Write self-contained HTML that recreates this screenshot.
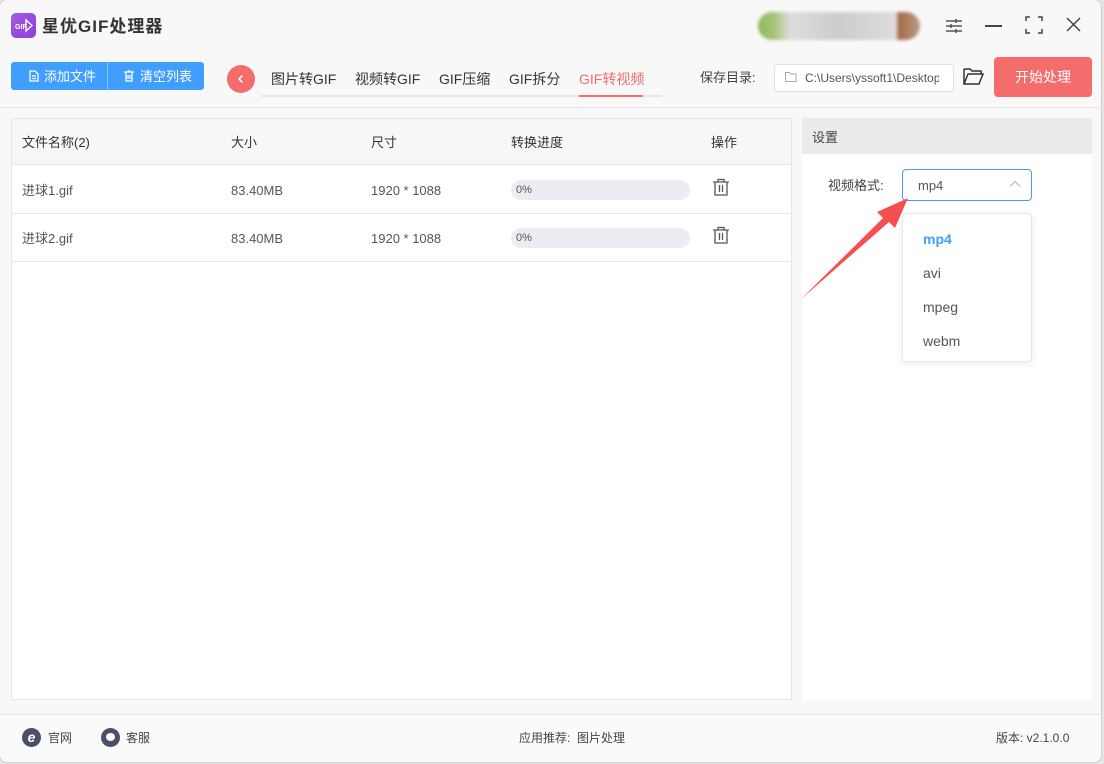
<!DOCTYPE html>
<html><head><meta charset="utf-8"><style>
*{box-sizing:border-box;margin:0;padding:0}
body{width:1104px;height:764px;background:#e6e6e6;font-family:"Liberation Sans","Noto Sans CJK SC",sans-serif;color:#333;position:relative;overflow:hidden;line-height:1.3}
.win{position:absolute;left:-1px;top:-1px;width:1103px;height:764px;background:#f8f8f8;border:1px solid #d0d0d0;border-radius:8px;overflow:hidden}
.abs{position:absolute}
div.abs:not([style*="background"]){margin-top:2px}
.t{font-size:13px;white-space:nowrap}
</style></head><body><div class="win">
<div class="abs" style="left:11px;top:13px;width:25px;height:25px;border-radius:5px;background:linear-gradient(135deg,#a55ae6,#8a3fd8)">
<svg width="25" height="25" viewBox="0 0 25 25"><text x="4" y="16" font-size="7" fill="#fff" font-family="Liberation Sans" font-weight="bold">GIF</text><path d="M15 7 L21 12.5 L15 18 Z" fill="none" stroke="#fff" stroke-width="1.4"/></svg></div>
<div class="abs" style="left:42px;top:14px;font-size:17px;font-weight:bold;color:#333;letter-spacing:1px">星优GIF处理器</div>
<div class="abs" style="left:758px;top:12px;width:162px;height:28px;border-radius:14px;background:linear-gradient(90deg,#8fb85a 0,#a5c47a 10%,#ddd 20%,#ccc 50%,#ddd 85%,#a56b48 87%,#b89c88 100%);filter:blur(1.5px)"></div>
<svg class="abs" style="left:944px;top:16px" width="20" height="20" viewBox="0 0 20 20" stroke="#555" stroke-width="1.5" fill="none"><path d="M2 5h16M2 10h16M2 15h16"/><path d="M12 3v4M7 8v4M12 13v4"/></svg>
<div class="abs" style="left:985px;top:25px;width:17px;height:1.5px;background:#444"></div>
<svg class="abs" style="left:1025px;top:16px" width="18" height="18" viewBox="0 0 18 18" stroke="#444" stroke-width="1.5" fill="none"><path d="M1 5V1h4M13 1h4v4M17 13v4h-4M5 17H1v-4"/></svg>
<svg class="abs" style="left:1066px;top:17px" width="15" height="15" viewBox="0 0 15 15" stroke="#444" stroke-width="1.5"><path d="M1 1l13 13M14 1L1 14"/></svg>
<div class="abs" style="left:11px;top:62px;width:193px;height:28px;border-radius:3px;background:#409eff"></div>
<div class="abs" style="left:107px;top:62px;width:1px;height:28px;background:#8cc3fb"></div>
<svg class="abs" style="left:29px;top:70px" width="10" height="12" viewBox="0 0 10 12" fill="none" stroke="#fff" stroke-width="1.3"><path d="M1 1h5l3 3v7H1z M3 6h4M3 8.5h4"/></svg>
<div class="abs t" style="left:44px;top:67px;color:#fff">添加文件</div>
<svg class="abs" style="left:124px;top:70px" width="10" height="12" viewBox="0 0 10 12" fill="none" stroke="#fff" stroke-width="1.3"><path d="M0 2h10M3.5 1h3M2 2v9h6V2M4 5v4M6 5v4"/></svg>
<div class="abs t" style="left:140px;top:67px;color:#fff">清空列表</div>
<div class="abs" style="left:227px;top:65px;width:28px;height:28px;border-radius:50%;background:#f56c6c"></div>
<svg class="abs" style="left:236px;top:74px" width="10" height="10" viewBox="0 0 10 10" fill="none" stroke="#fff" stroke-width="1.5"><path d="M6.5 1.5L3 5l3.5 3.5"/></svg>
<div class="abs" style="left:261px;top:95px;width:401px;height:2px;background:#e4e7ed"></div>
<div class="abs" style="left:579px;top:95px;width:64px;height:2px;background:#f56c6c"></div>
<div class="abs" style="left:271px;top:68px;font-size:14px;color:#333">图片转GIF</div>
<div class="abs" style="left:355px;top:68px;font-size:14px;color:#333">视频转GIF</div>
<div class="abs" style="left:439px;top:68px;font-size:14px;color:#333">GIF压缩</div>
<div class="abs" style="left:509px;top:68px;font-size:14px;color:#333">GIF拆分</div>
<div class="abs" style="left:579px;top:68px;font-size:14px;color:#f56c6c">GIF转视频</div>
<div class="abs t" style="left:700px;top:68px;color:#444">保存目录:</div>
<div class="abs" style="left:774px;top:64px;width:180px;height:28px;border:1px solid #dcdfe6;border-radius:4px;background:#fff"></div>
<svg class="abs" style="left:785px;top:72px" width="12" height="10" viewBox="0 0 12 10" fill="none" stroke="#aaa"><path d="M.5 .5h4l1 1.5h5.5v7.5H.5z"/></svg>
<div class="abs" style="left:805px;top:69px;font-size:12px;color:#555;width:134px;overflow:hidden;white-space:nowrap">C:\Users\yssoft1\Desktop</div>
<svg class="abs" style="left:963px;top:67px" width="21" height="19" viewBox="0 0 21 19" fill="none" stroke="#333" stroke-width="1.5"><path d="M1 2h6l2 2h9v3M1 2v15h15l4-10H5L1 17"/></svg>
<div class="abs" style="left:994px;top:57px;width:98px;height:40px;border-radius:4px;background:#f56c6c;color:#fff;font-size:14px;text-align:center;line-height:40px">开始处理</div>
<div class="abs" style="left:0;top:107px;width:1104px;height:1px;background:#e6e6e6"></div>
<div class="abs" style="left:11px;top:118px;width:781px;height:582px;background:#fff;border:1px solid #e6e6e6"></div>
<div class="abs" style="left:12px;top:119px;width:779px;height:46px;background:#f7f7f7;border-bottom:1px solid #e8e8e8"></div>
<div class="abs t" style="left:22px;top:133px">文件名称(2)</div>
<div class="abs t" style="left:231px;top:133px">大小</div>
<div class="abs t" style="left:371px;top:133px">尺寸</div>
<div class="abs t" style="left:511px;top:133px">转换进度</div>
<div class="abs t" style="left:711px;top:133px">操作</div>
<div class="abs" style="left:12px;top:213px;width:779px;height:1px;background:#e8e8e8"></div>
<div class="abs" style="left:12px;top:261px;width:779px;height:1px;background:#e8e8e8"></div>
<div class="abs t" style="left:22px;top:181px;color:#555">进球1.gif</div>
<div class="abs t" style="left:231px;top:181px;color:#555">83.40MB</div>
<div class="abs t" style="left:371px;top:181px;color:#555">1920 * 1088</div>
<div class="abs" style="left:511px;top:180px;width:179px;height:20px;border-radius:10px;background:#ebedf3;font-size:11px;color:#555;line-height:20px;padding-left:5px">0%</div>
<div class="abs t" style="left:22px;top:229px;color:#555">进球2.gif</div>
<div class="abs t" style="left:231px;top:229px;color:#555">83.40MB</div>
<div class="abs t" style="left:371px;top:229px;color:#555">1920 * 1088</div>
<div class="abs" style="left:511px;top:228px;width:179px;height:20px;border-radius:10px;background:#ebedf3;font-size:11px;color:#555;line-height:20px;padding-left:5px">0%</div>
<svg class="abs" style="left:712px;top:178px" width="18" height="18" viewBox="0 0 18 18" fill="none" stroke="#555" stroke-width="1.3"><path d="M1 4h16M6 4V1.5h6V4M3 4v13h12V4M7.5 7v7M10.5 7v7"/></svg>
<svg class="abs" style="left:712px;top:226px" width="18" height="18" viewBox="0 0 18 18" fill="none" stroke="#555" stroke-width="1.3"><path d="M1 4h16M6 4V1.5h6V4M3 4v13h12V4M7.5 7v7M10.5 7v7"/></svg>
<div class="abs" style="left:802px;top:118px;width:290px;height:582px;background:#fff"></div>
<div class="abs" style="left:802px;top:118px;width:290px;height:36px;background:#ebebeb"></div>
<div class="abs t" style="left:812px;top:128px;color:#444">设置</div>
<div class="abs t" style="left:828px;top:176px;color:#444">视频格式:</div>
<div class="abs" style="left:902px;top:169px;width:130px;height:32px;border:1px solid #409eff;border-radius:4px;background:#fff"></div>
<div class="abs t" style="left:918px;top:176px;color:#555">mp4</div>
<svg class="abs" style="left:1009px;top:180px" width="12" height="8" viewBox="0 0 12 8" fill="none" stroke="#bbb" stroke-width="1.2"><path d="M1 6.5L6 1.5l5 5"/></svg>
<div class="abs" style="left:902px;top:213px;width:130px;height:149px;border:1px solid #e4e7ed;border-radius:4px;background:#fff;box-shadow:0 2px 8px rgba(0,0,0,.08)"></div>
<div class="abs" style="left:923px;top:228px;font-size:14px;font-weight:bold;color:#409eff">mp4</div>
<div class="abs" style="left:923px;top:262px;font-size:14px;color:#555">avi</div>
<div class="abs" style="left:923px;top:296px;font-size:14px;color:#555">mpeg</div>
<div class="abs" style="left:923px;top:330px;font-size:14px;color:#555">webm</div>
<svg class="abs" style="left:795px;top:190px" width="120" height="115" viewBox="0 0 120 115"><path d="M5 110 L88 28 L82 22 L113 8 L100 38 L94 32 Z" fill="#f5504f"/></svg>
<div class="abs" style="left:0;top:714px;width:1104px;height:50px;background:#fafafa;border-top:1px solid #e6e6e6"></div>
<div class="abs" style="left:22px;top:728px;width:19px;height:19px;border-radius:50%;background:#4a5068;color:#fff;font-size:14px;font-weight:bold;text-align:center;line-height:18px;font-style:italic">e</div>
<div class="abs" style="left:48px;top:729px;font-size:12px;color:#444">官网</div>
<div class="abs" style="left:101px;top:728px;width:19px;height:19px;border-radius:50%;background:#4a5068"></div>
<div class="abs" style="left:106px;top:733px;width:9px;height:8px;border-radius:50%;background:#fff"></div>
<div class="abs" style="left:126px;top:729px;font-size:12px;color:#444">客服</div>
<div class="abs" style="left:519px;top:729px;font-size:12px;color:#444">应用推荐:&nbsp; 图片处理</div>
<div class="abs" style="left:996px;top:729px;font-size:12px;color:#444">版本: v2.1.0.0</div>
</div></body></html>
